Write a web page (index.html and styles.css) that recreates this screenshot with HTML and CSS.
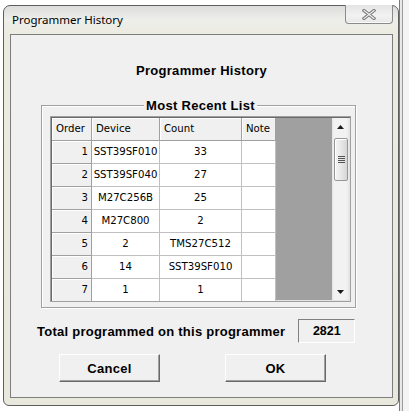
FILE: index.html
```html
<!DOCTYPE html>
<html>
<head>
<meta charset="utf-8">
<link rel="stylesheet" href="styles.css">
</head>
<body>
<div class="window">
  <div class="titlebar">
    <span class="title">Programmer History</span>
    <div class="close">
      <svg width="14" height="11" viewBox="0 0 14 11">
        <path d="M2 1.5 L12 9.5 M12 1.5 L2 9.5" stroke="#7a7a7a" stroke-width="3.2" stroke-linecap="square" fill="none"/>
        <path d="M2 1.5 L12 9.5 M12 1.5 L2 9.5" stroke="#f4f4f4" stroke-width="1.2" stroke-linecap="square" fill="none"/>
      </svg>
    </div>
  </div>
  <div class="client">
    <h1 class="heading">Programmer History</h1>
    <fieldset class="group">
      <legend class="legend">Most Recent List</legend>
      <div class="grid">
        <div class="table">
          <div class="cell fixed hdr">Order</div>
          <div class="cell fixed hdr">Device</div>
          <div class="cell fixed hdr">Count</div>
          <div class="cell fixed hdr">Note</div>

          <div class="cell fixed num">1</div>
          <div class="cell">SST39SF010</div>
          <div class="cell">33</div>
          <div class="cell"></div>

          <div class="cell fixed num">2</div>
          <div class="cell">SST39SF040</div>
          <div class="cell">27</div>
          <div class="cell"></div>

          <div class="cell fixed num">3</div>
          <div class="cell">M27C256B</div>
          <div class="cell">25</div>
          <div class="cell"></div>

          <div class="cell fixed num">4</div>
          <div class="cell">M27C800</div>
          <div class="cell">2</div>
          <div class="cell"></div>

          <div class="cell fixed num">5</div>
          <div class="cell">2</div>
          <div class="cell">TMS27C512</div>
          <div class="cell"></div>

          <div class="cell fixed num">6</div>
          <div class="cell">14</div>
          <div class="cell">SST39SF010</div>
          <div class="cell"></div>

          <div class="cell fixed num">7</div>
          <div class="cell">1</div>
          <div class="cell">1</div>
          <div class="cell"></div>
        </div>
        <div class="empty"></div>
        <div class="scrollbar">
          <div class="arrow">
            <svg width="7" height="4" viewBox="0 0 7 4"><path d="M0 4 L3.5 0 L7 4 Z" fill="#1a1a1a"/></svg>
          </div>
          <div class="thumb">
            <svg width="7" height="7" viewBox="0 0 7 7">
              <path d="M0 0.5 H7 M0 2.5 H7 M0 4.5 H7 M0 6.5 H7" stroke="#555" stroke-width="1"/>
            </svg>
          </div>
          <div class="track"></div>
          <div class="arrow">
            <svg width="7" height="4" viewBox="0 0 7 4"><path d="M0 0 L7 0 L3.5 4 Z" fill="#1a1a1a"/></svg>
          </div>
        </div>
      </div>
    </fieldset>
    <div class="total">
      <span class="total-label">Total programmed on this programmer</span>
      <span class="total-box">2821</span>
    </div>
    <div class="buttons">
      <button class="btn">Cancel</button>
      <button class="btn">OK</button>
    </div>
  </div>
</div>
</body>
</html>
```
FILE: styles.css
```css
* { box-sizing: border-box; }
html, body { margin: 0; padding: 0; }
body {
  width: 409px;
  height: 411px;
  overflow: hidden;
  padding: 5px 0 0 3px;
  background:
    linear-gradient(to right, #ffffff 0, #ffffff 399px, #7a7a7a 399px, #7a7a7a 400px, #e8e8e8 400px, #e8e8e8 402px, #9a9a9a 402px, #9a9a9a 403px, #f4f4f4 403px);
}
.window {
  width: 396px;
  height: 401px;
  border: 1px solid #5e5e5e;
  border-radius: 7px 7px 6px 6px;
  background: linear-gradient(#dcdcdc 0, #eeeeea 14px, #ebebe0 30px, #e8e8dc 100%);
  padding: 0 5px 7px 6px;
  display: flex;
  flex-direction: column;
}
.titlebar {
  height: 28px;
  display: flex;
  justify-content: space-between;
  align-items: flex-start;
  margin-left: -6px;
}
.title {
  font-family: "Noto Sans", sans-serif;
  font-size: 11.5px;
  color: #000;
  padding: 6px 0 0 8px;
  line-height: 16px;
}
.close {
  width: 48px;
  height: 19px;
  margin-top: -1px;
  border: 1px solid #8a8a8a;
  border-top: none;
  border-radius: 0 0 4px 4px;
  background: linear-gradient(#e4e4e4, #f2f2f2 60%, #e6e6e6);
  box-shadow: inset 0 -1px 0 #fafafa;
  display: flex;
  align-items: center;
  justify-content: center;
  padding-top: 1px;
}
.client {
  height: 364px;
  border: 1px solid #7d7d7d;
  background: #f0f0f0;
  display: flex;
  flex-direction: column;
  padding: 28px 0 0 0;
}
.heading {
  margin: 0;
  font-family: "Liberation Sans", Arial, sans-serif;
  font-weight: bold;
  font-size: 13px;
  line-height: 16px;
  text-align: center;
  letter-spacing: 0.3px;
}
.group {
  margin: 19px 0 0 30px;
  width: 315px;
  padding: 3px 4px 5px 8px;
  border: 1px solid #a0a0a0;
  box-shadow: inset 1px 1px 0 #fff, 1px 1px 0 #fff;
  min-width: 0;
}
.legend {
  margin: 0 auto;
  padding: 0 2px;
  font-family: "Liberation Sans", Arial, sans-serif;
  font-weight: bold;
  font-size: 13px;
  line-height: 15px;
  letter-spacing: 0.3px;
  background: #f0f0f0;
}
.grid {
  width: 301px;
  height: 186px;
  border: 1px solid #a0a0a0;
  display: flex;
  box-shadow: inset 1px 1px 0 #696969, inset -1px -1px 0 #e3e3e3;
  padding: 1px 1px 1px 1px;
  overflow: hidden;
  background: #a0a0a0;
}
.table {
  display: grid;
  grid-template-columns: 40px 68px 82px 34px;
  grid-auto-rows: 23px;
  align-content: start;
  font-family: "DejaVu Sans Condensed", "DejaVu Sans", sans-serif;
  font-stretch: condensed;
  font-size: 11.3px;
  color: #000;
}
.cell {
  background: #fff;
  border-right: 1px solid #c0c0c0;
  border-bottom: 1px solid #c0c0c0;
  line-height: 22px;
  text-align: center;
  white-space: nowrap;
  overflow: hidden;
}
.fixed {
  background: #f0f0f0;
  border-right-color: #a0a0a0;
  border-bottom-color: #a0a0a0;
  box-shadow: inset 1px 1px 0 #fff;
}
.hdr { text-align: left; padding-left: 4px; }
.num { text-align: right; padding-right: 3px; }
.empty { flex: 1; background: #a0a0a0; }
.scrollbar {
  width: 17px;
  display: flex;
  flex-direction: column;
  background: linear-gradient(to right, #e4e4e4 0, #f2f2f2 2px, #f2f2f2 14px, #e8e8e8 17px);
}
.arrow {
  height: 17px;
  display: flex;
  align-items: center;
  justify-content: center;
}
.thumb {
  margin: 3px 1px 0 2px;
  height: 43px;
  border: 1px solid #969696;
  border-radius: 2px;
  background: linear-gradient(to right, #f4f4f4, #e8e8e8 50%, #d6d6d6);
  box-shadow: inset 1px 1px 0 #fff;
  display: flex;
  align-items: center;
  justify-content: center;
}
.track { flex: 1; }
.total {
  display: flex;
  align-items: center;
  margin: 11px 0 0 26px;
}
.total-label {
  font-family: "Liberation Sans", Arial, sans-serif;
  font-weight: bold;
  font-size: 13px;
  letter-spacing: 0.25px;
}
.total-box {
  margin-left: 13px;
  width: 57px;
  height: 24px;
  border: 1px solid;
  border-color: #808080 #fff #fff #808080;
  font-family: "Liberation Sans", Arial, sans-serif;
  font-weight: bold;
  font-size: 12.5px;
  line-height: 22px;
  text-align: center;
}
.buttons {
  display: flex;
  margin: 11px 0 0 48px;
  gap: 65px;
}
.btn {
  width: 101px;
  height: 28px;
  margin: 0;
  padding: 0;
  background: #f0f0f0;
  border: 1px solid;
  border-color: #fff #696969 #696969 #fff;
  box-shadow: inset -1px -1px 0 #a0a0a0;
  font-family: "Liberation Sans", Arial, sans-serif;
  font-weight: bold;
  font-size: 13px;
  letter-spacing: 0.3px;
  color: #000;
}
```
